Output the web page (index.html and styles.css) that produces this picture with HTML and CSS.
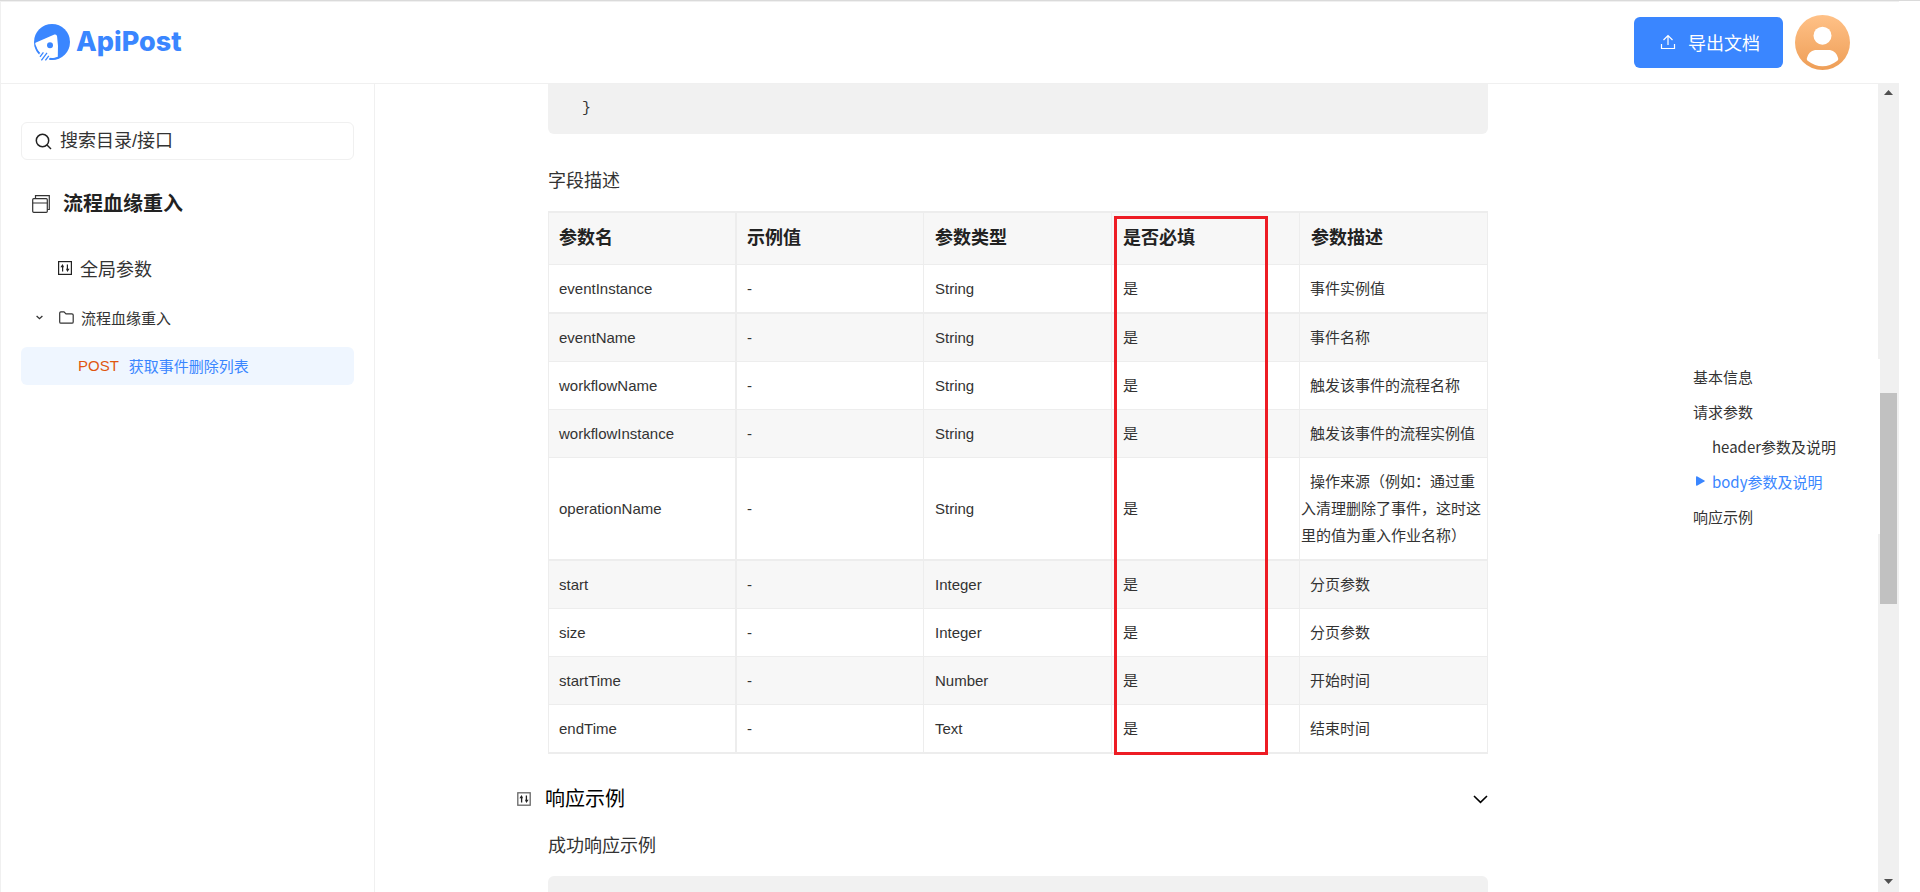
FILE: index.html
```
<!DOCTYPE html>
<html lang="zh-CN">
<head>
<meta charset="utf-8">
<title>ApiPost</title>
<link rel="stylesheet" href="styles.css">
</head>
<body>
<div class="app">
  <header class="topbar">
    <a class="brand" href="#">
      <svg class="brand-mark" width="36" height="37" viewBox="0 0 36 37" aria-hidden="true">
        <circle cx="18" cy="18" r="18" fill="#3a86ff"/>
        <path d="M1.200 19.400Q1.400 18.900 2 18.600L20.400 10.600Q22.700 9.900 23.100 12.600Q24.600 22 23.800 33.200Q18 35 12 33Q2.600 29 1.200 19.400Z" fill="#fff"/>
        <path d="M1.200 21.600Q2.800 27.200 6.400 30.200" fill="none" stroke="#3a86ff" stroke-width="1.300"/>
        <path d="M3 37L5.500 29.500L12 27L16.500 31L15 37Z" fill="#fff"/>
        <path d="M6 32.800L9.400 28.300M7.400 36.400L13 28.800M11.400 36.400L14.800 31.800" fill="none" stroke="#3a86ff" stroke-width="1.300"/>
        <path d="M15.400 34.900Q20 35.400 24.200 33.600" fill="none" stroke="#3a86ff" stroke-width="1.600"/>
        <circle cx="16" cy="21.200" r="3" fill="#3a86ff"/>
      </svg>
      <span class="brand-name">ApiPost</span>
    </a>
    <div class="topbar-actions">
      <button class="export" type="button">
        <svg width="16" height="16" viewBox="0 0 16 16" fill="none" stroke="currentColor" stroke-width="1.200" aria-hidden="true"><path d="M8 11V1.500M3.500 6L8 1.500L12.500 6M1.500 10V14.500H14.500V10"/></svg>
        导出文档
      </button>
      <svg class="avatar" width="55" height="55" viewBox="0 0 55 55" role="img" aria-label="用户头像">
        <defs><linearGradient id="skin" x1="0" y1="0" x2="0" y2="1"><stop offset="0" stop-color="#ffc187"/><stop offset="1" stop-color="#ee9e57"/></linearGradient></defs>
        <circle cx="27.500" cy="27.500" r="27.500" fill="url(#skin)"/>
        <circle cx="27.500" cy="20.700" r="9" fill="#fff"/>
        <path d="M20 35H35Q41.500 36 43.200 43.500Q43.500 45 42 46Q35 51.300 27.500 51.300T13 46Q11.500 45 11.800 43.500Q13.500 36 20 35Z" fill="#fff"/>
      </svg>
    </div>
  </header>

  <div class="body">
    <nav class="sidebar">
      <label class="search">
        <svg width="17" height="17" viewBox="0 0 17 17" fill="none" stroke="#222" stroke-width="1.500" aria-hidden="true"><circle cx="7.500" cy="7.500" r="6.200"/><path d="M12 12L16 16"/></svg>
        <input class="search-input" type="text" placeholder="搜索目录/接口" aria-label="搜索目录/接口">
      </label>
      <h1 class="project">
        <svg width="18" height="18" viewBox="0 0 18 18" fill="none" stroke="#333" stroke-width="1.200" aria-hidden="true"><rect x=".7" y="3.700" width="14.600" height="13.600" rx="1"/><path d="M.7 8H15.300M3.500 3.500V.7H17.300V14.500H15.500"/></svg>
        流程血缘重入
      </h1>
      <a class="node node-global" href="#">
        <svg width="14" height="14" viewBox="0 0 14 14" fill="none" stroke="#222" stroke-width="1.200" aria-hidden="true"><rect x=".6" y=".6" width="12.800" height="12.800"/><path d="M4.600 10.500V4.500M9.400 3.500V9.500"/><path d="M2.400 6.200L4.600 3L6 6.200ZM11.600 7.800L9.400 11L8 7.800Z" fill="#222" stroke="none"/></svg>
        全局参数
      </a>
      <a class="node node-folder" href="#">
        <svg class="twist" width="7" height="5" viewBox="0 0 7 5" fill="none" stroke="#333" stroke-width="1.300" aria-hidden="true"><path d="M.6 1L3.500 3.700L6.400 1"/></svg>
        <svg width="15" height="13" viewBox="0 0 15 13" fill="none" stroke="#333" stroke-width="1.200" aria-hidden="true"><path d="M.7 2Q.7.8 1.900.8H5L7 2.800H12.900Q14.200 2.800 14.200 4V10.900Q14.200 12.200 12.900 12.200H2Q.7 12.200.7 10.900Z"/></svg>
        流程血缘重入
      </a>
      <a class="node node-api" href="#"><span class="verb">POST</span>获取事件删除列表</a>
    </nav>

    <main class="main">
      <article class="doc">
        <pre class="code code-end">}</pre>
        <h3 class="caption">字段描述</h3>
        <div class="table-wrap">
          <table class="params">
            <thead>
              <tr><th>参数名</th><th>示例值</th><th>参数类型</th><th>是否必填</th><th>参数描述</th></tr>
            </thead>
            <tbody>
              <tr class="thick"><td>eventInstance</td><td>-</td><td>String</td><td>是</td><td class="desc">事件实例值</td></tr>
              <tr><td>eventName</td><td>-</td><td>String</td><td>是</td><td class="desc">事件名称</td></tr>
              <tr><td>workflowName</td><td>-</td><td>String</td><td>是</td><td class="desc">触发该事件的流程名称</td></tr>
              <tr><td>workflowInstance</td><td>-</td><td>String</td><td>是</td><td class="desc">触发该事件的流程实例值</td></tr>
              <tr class="thick"><td>operationName</td><td>-</td><td>String</td><td>是</td><td class="desc">操作来源（例如：通过重入清理删除了事件，这时这里的值为重入作业名称）</td></tr>
              <tr><td>start</td><td>-</td><td>Integer</td><td>是</td><td class="desc">分页参数</td></tr>
              <tr><td>size</td><td>-</td><td>Integer</td><td>是</td><td class="desc">分页参数</td></tr>
              <tr><td>startTime</td><td>-</td><td>Number</td><td>是</td><td class="desc">开始时间</td></tr>
              <tr class="thick"><td>endTime</td><td>-</td><td>Text</td><td>是</td><td class="desc">结束时间</td></tr>
            </tbody>
          </table>
          <div class="marker"></div>
        </div>
        <div class="section">
          <svg width="14" height="14" viewBox="0 0 14 14" fill="none" stroke="#666" stroke-width="1.300" aria-hidden="true"><rect x=".8" y=".8" width="12.400" height="12.400"/><path stroke="#222" d="M4.600 10.500V4.500M9.400 3.500V9.500"/><path d="M2.400 6.200L4.600 3L6 6.200ZM11.600 7.800L9.400 11L8 7.800Z" fill="#222" stroke="none"/></svg>
          <h2 class="section-title">响应示例</h2>
          <button class="fold" type="button" aria-label="收起">
            <svg width="15" height="9" viewBox="0 0 15 9" fill="none" stroke="#000" stroke-width="1.600" aria-hidden="true"><path d="M1 1L7.500 7.300L14 1"/></svg>
          </button>
        </div>
        <h3 class="caption caption-response">成功响应示例</h3>
        <pre class="code code-start"></pre>
      </article>
      <aside class="toc">
        <a class="toc-link" href="#">基本信息</a>
        <a class="toc-link" href="#">请求参数</a>
        <a class="toc-link toc-sub" href="#">header参数及说明</a>
        <a class="toc-link toc-sub toc-active" href="#"><svg class="toc-arrow" width="9" height="10" viewBox="0 0 9 10" aria-hidden="true"><path d="M0 1.200Q0-.2 1.400.5L8.400 4.400Q9.300 5 8.400 5.600L1.400 9.500Q0 10.200 0 8.800Z" fill="#3a86ff"/></svg>body参数及说明</a>
        <a class="toc-link" href="#">响应示例</a>
      </aside>
      <div class="scrollbar" aria-hidden="true">
        <svg class="arrow" width="9" height="5" viewBox="0 0 9 5" fill="#505050"><path d="M0 5L4.500 0L9 5Z"/></svg>
        <div class="track">
          <div class="thumb"></div>
        </div>
        <svg class="arrow" width="9" height="5" viewBox="0 0 9 5" fill="#505050"><path d="M0 0L4.500 5L9 0Z"/></svg>
      </div>
    </main>
  </div>
</div>
</body>
</html>
```
FILE: styles.css
```
* {
  box-sizing: border-box;
}

body {
  margin: 0;
  border-top: 1px solid #dadada;
  background: #fff;
  color: #333;
  font-family: "Liberation Sans", "Noto Sans CJK SC", sans-serif;
  font-size: 15px;
}

a {
  color: inherit;
  text-decoration: none;
}

button {
  border: 0;
  font: inherit;
}

svg {
  flex: none;
}

h1,
h2,
h3,
pre {
  margin: 0;
  font-weight: 400;
}

.app {
  display: flex;
  flex-direction: column;
  height: calc(100vh - 1px);
  margin-right: 21px;
  border-top: 1px solid #f0f0f0;
  border-left: 1px solid #f0f0f0;
  overflow: hidden;
}

.topbar {
  display: flex;
  flex: none;
  align-items: center;
  justify-content: space-between;
  height: 82px;
  padding: 0 49px 0 33px;
  border-bottom: 1px solid #f0f0f0;
}

.brand {
  display: flex;
  align-items: center;
  gap: 6px;
}

.brand-name {
  padding-bottom: 2px;
  color: #3a86ff;
  font: 800 27px/34px Inter, sans-serif;
}

.topbar-actions {
  display: flex;
  align-items: center;
  gap: 12px;
}

.export {
  display: flex;
  align-items: center;
  gap: 12px;
  height: 51px;
  padding: 0 23px 2px 26px;
  border-radius: 6px;
  background: #3a86ff;
  color: #fff;
  font-size: 18px;
}

.body {
  display: flex;
  flex: 1;
  min-height: 0;
}

.sidebar {
  display: flex;
  flex: none;
  flex-direction: column;
  width: 374px;
  padding: 38px 20px 0;
  border-right: 1px solid #f0f0f0;
}

.search {
  display: flex;
  align-items: center;
  gap: 8px;
  height: 38px;
  padding: 0 13px;
  border: 1px solid #f0f0f0;
  border-radius: 6px;
}

.search-input {
  flex: 1;
  min-width: 0;
  padding: 0;
  border: 0;
  outline: 0;
  background: none;
  color: #333;
  font: inherit;
  font-size: 18px;
}

.search-input::placeholder {
  color: #333;
  opacity: 1;
}

.project {
  display: flex;
  align-items: center;
  gap: 13px;
  margin-top: 26px;
  padding-left: 11px;
  color: #222;
  font-size: 20px;
  font-weight: 700;
  line-height: 36px;
}

.node {
  display: flex;
  align-items: center;
  gap: 8px;
  height: 38px;
  border-radius: 6px;
}

.node-global {
  margin-top: 27px;
  padding-left: 37px;
  font-size: 18px;
}

.node-folder {
  margin-top: 11px;
  padding-left: 15px;
  gap: 7px;
}

.twist {
  margin-right: 9px;
}

.node-api {
  margin-top: 11px;
  padding-left: 57px;
  padding-bottom: 2px;
  gap: 10px;
  background: #eff6ff;
  color: #3a86ff;
}

.verb {
  color: #e0560f;
}

.main {
  display: flex;
  flex: 1;
  min-width: 0;
}

.doc {
  flex: 1;
  min-width: 0;
  padding-left: 173px;
  overflow: hidden;
}

.code {
  background: #f1f1f1;
  font: 15px/28px "Liberation Mono", monospace;
}

.code-end {
  height: 50px;
  padding: 11px 34px;
  border-radius: 0 0 6px 6px;
}

.code-start {
  height: 60px;
  border-radius: 6px 6px 0 0;
}

.caption {
  padding: 33px 0 16px;
  font-size: 18px;
  line-height: 28px;
}

.caption-response {
  padding-top: 17px;
}

.table-wrap {
  position: relative;
}

.params {
  width: 100%;
  table-layout: fixed;
  border: solid #ededed;
  border-width: 2px 0 0;
  border-spacing: 0;
}

.params th,
.params td {
  height: 48px;
  padding: 10px;
  border: solid #ededed;
  border-width: 0 1px 1px 0;
  text-align: left;
  line-height: 27px;
}

.params th:first-child,
.params td:first-child {
  border-left-width: 1px;
}

.params th:nth-child(2),
.params td:nth-child(2) {
  border-left-width: 1px;
}

.params th:nth-child(n + 3),
.params td:nth-child(n + 3) {
  padding-left: 11px;
}

.params th {
  height: 52px;
  background: #f7f7f7;
  color: #222;
  font-size: 18px;
}

.params tr:nth-child(even) td {
  background: #f7f7f7;
}

.params .thick td {
  height: 49px;
  border-bottom-width: 2px;
}

.params td.desc {
  padding-right: 1px;
  padding-left: 1px;
  text-indent: 9px;
}

.marker {
  position: absolute;
  top: 5px;
  bottom: -1px;
  left: calc(60% + 2px);
  width: 154px;
  border: 3px solid #ed1c24;
}

.section {
  display: flex;
  align-items: center;
  gap: 14px;
  margin: 29px 0 0 -31px;
}

.section-title {
  flex: 1;
  color: #000;
  font-size: 20px;
  line-height: 32px;
}

.fold {
  display: flex;
  padding: 0;
  background: none;
}

.toc {
  z-index: 1;
  flex: none;
  align-self: center;
  width: 392px;
  margin: 0 -2px 84px 0;
  padding-left: 205px;
  background: #fff;
  font-family: "Noto Sans CJK SC", sans-serif;
}

.toc-link {
  display: flex;
  align-items: center;
  height: 35px;
}

.toc-sub {
  padding-left: 19px;
}

.toc-active {
  gap: 7px;
  padding-left: 3px;
  color: #3a86ff;
}

.scrollbar {
  display: flex;
  flex: none;
  flex-direction: column;
  align-items: center;
  justify-content: space-between;
  width: 21px;
  padding: 6px 2px 8px;
  background: #f0f0f0;
}

.track {
  flex: 1;
  align-self: stretch;
  display: grid;
  grid-template-rows: 298fr 211fr 275fr;
}

.thumb {
  grid-row: 2;
  background: #c1c1c1;
}
```
